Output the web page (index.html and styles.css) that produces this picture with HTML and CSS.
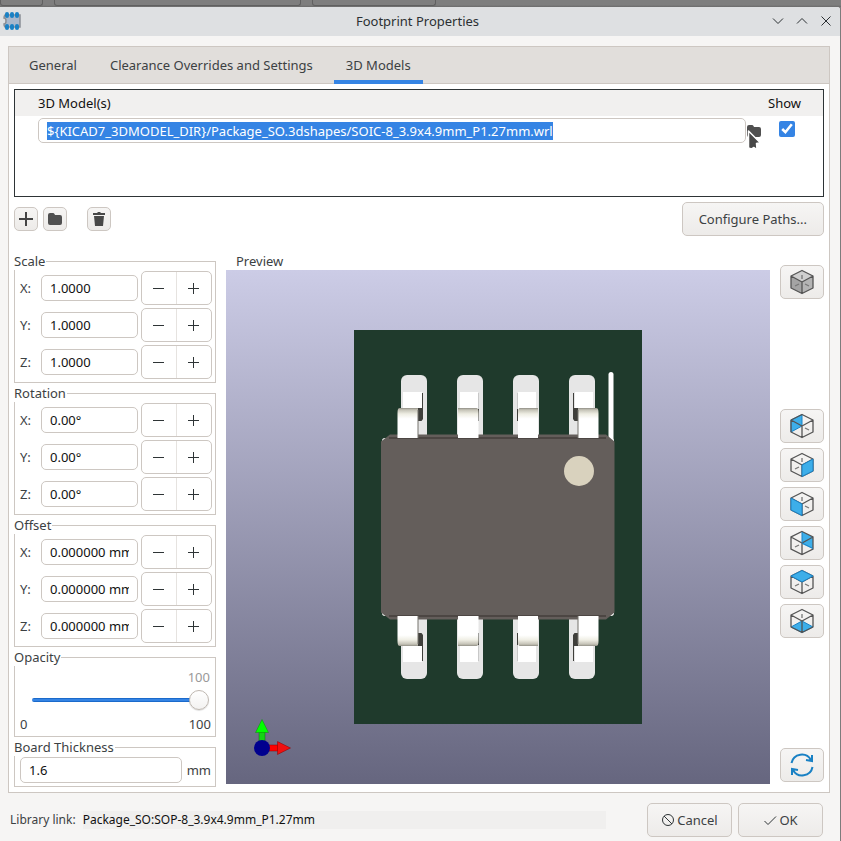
FILE: index.html
```html
<!DOCTYPE html>
<html lang="en">
<head>
<meta charset="utf-8">
<title>Footprint Properties</title>
<link rel="stylesheet" href="styles.css">
</head>
<body>
<svg class="defs" aria-hidden="true">
  <defs>
    <symbol id="i-minus" viewBox="0 0 12 12"><path d="M0 6.500h11" stroke="#2e3436"/></symbol>
    <symbol id="i-plus" viewBox="0 0 12 12"><path d="M0 6.500h11M5.500 1v11" stroke="#2e3436"/></symbol>
    <symbol id="i-folder" viewBox="0 0 16 16"><path d="M1 4q0-2 2-2h3q1 0 1.500 1l.5 1H13q2 0 2 2v6q0 2-2 2H3q-2 0-2-2z" fill="#505050"/></symbol>
    <symbol id="cube" viewBox="0 0 24 26">
      <path d="M12 1.500 23 7v12l-11 5.500L1 19V7zM1 7l11 6 11-6M12 13v11.500" fill="none" stroke="#545454" stroke-width="1.300" stroke-linejoin="round"/>
      <path d="M12 6v4M5 17l4-2M19 17l-4-2" stroke="#777" stroke-width="1.300"/>
    </symbol>
    <symbol id="cube-back" viewBox="0 0 24 26">
      <path d="M12 1.500 23 7v12l-11 5.500L1 19V7zM1 7l11 6 11-6M12 13v11.500" fill="none" stroke="#545454" stroke-width="1.300" stroke-linejoin="round"/>
    </symbol>
  </defs>
</svg>
<div class="backdrop" aria-hidden="true"><i class="first"></i><i></i><i class="last"></i></div>
<main class="window">
  <header class="titlebar">
    <svg class="app-icon" width="18" height="18" viewBox="0 0 18 18">
      <path d="M2 3h15v12H2q-1-1-1-3 2 0 2-3T1 6q0-2 1-3z" fill="#a9b8cc" stroke="#8a8f96" stroke-width="1.500"/>
      <g fill="#1a81c4"><rect x="2" y="0" width="4" height="6" rx="2"/><rect x="7" y="0" width="4" height="6" rx="2"/><rect x="12" y="0" width="4" height="6" rx="2"/><rect x="2" y="12" width="4" height="6" rx="2"/><rect x="7" y="12" width="4" height="6" rx="2"/><rect x="12" y="12" width="4" height="6" rx="2"/></g>
    </svg>
    <h1>Footprint Properties</h1>
    <div class="window-buttons">
      <button type="button" aria-label="Minimize"><svg width="12" height="12" viewBox="0 0 12 12"><path d="M1 3.500 6 8.500l5-5"/></svg></button>
      <button type="button" aria-label="Maximize"><svg width="12" height="12" viewBox="0 0 12 12"><path d="M1 8.500 6 3.500l5 5"/></svg></button>
      <button type="button" aria-label="Close"><svg width="12" height="12" viewBox="0 0 12 12"><path d="m1.500 1.500 9 9m0-9-9 9"/></svg></button>
    </div>
  </header>

  <section class="notebook">
    <nav class="tabs" role="tablist">
      <button type="button" role="tab">General</button>
      <button type="button" role="tab">Clearance Overrides and Settings</button>
      <button type="button" role="tab" aria-selected="true">3D Models</button>
    </nav>
    <div class="page">
      <div class="models">
        <table>
          <thead><tr><th class="name">3D Model(s)</th><th class="show">Show</th></tr></thead>
          <tbody><tr>
            <td class="name"><div class="path">
              <input id="model-path" type="text" aria-label="3D model path" value="${KICAD7_3DMODEL_DIR}/Package_SO.3dshapes/SOIC-8_3.9x4.9mm_P1.27mm.wrl" autofocus>
              <button type="button" aria-label="Browse"><svg width="16" height="16"><use href="#i-folder"/></svg></button>
              <svg class="pointer" width="16" height="24" viewBox="0 0 16 24"><path d="M2.500 2 14 13.500 10.500 14.500 11 20.500 8 18.500 5.500 20 2.500 19z" fill="#484848" stroke="#fff" stroke-width="1.500" stroke-linejoin="round"/></svg>
            </div></td>
            <td class="show"><input type="checkbox" aria-label="Show model" checked></td>
          </tr></tbody>
        </table>
      </div>

      <div class="toolbar">
        <button class="btn tool" type="button" aria-label="Add"><svg width="16" height="16" viewBox="0 0 16 16"><path d="M1 8h14M8 1v14" stroke="#444" stroke-width="2"/></svg></button>
        <button class="btn tool" type="button" aria-label="Browse library"><svg width="16" height="16"><use href="#i-folder"/></svg></button>
        <button class="btn tool remove" type="button" aria-label="Delete"><svg width="16" height="16" viewBox="0 0 16 16"><path d="M2 2h4l1-1h2l1 1h4v2H2zM3 5h10l-1 10H4z" fill="#484848"/></svg></button>
        <button class="btn configure" type="button">Configure Paths...</button>
      </div>

      <div class="body">
        <div class="settings">
          <fieldset>
            <legend>Scale</legend>
            <div class="row"><label for="sx">X:</label><input id="sx" class="entry" value="1.0000"><span class="spin"><button type="button" aria-label="Decrease"><svg><use href="#i-minus"/></svg></button><button type="button" aria-label="Increase"><svg><use href="#i-plus"/></svg></button></span></div>
            <div class="row"><label for="sy">Y:</label><input id="sy" class="entry" value="1.0000"><span class="spin"><button type="button" aria-label="Decrease"><svg><use href="#i-minus"/></svg></button><button type="button" aria-label="Increase"><svg><use href="#i-plus"/></svg></button></span></div>
            <div class="row"><label for="sz">Z:</label><input id="sz" class="entry" value="1.0000"><span class="spin"><button type="button" aria-label="Decrease"><svg><use href="#i-minus"/></svg></button><button type="button" aria-label="Increase"><svg><use href="#i-plus"/></svg></button></span></div>
          </fieldset>
          <fieldset>
            <legend>Rotation</legend>
            <div class="row"><label for="rx">X:</label><input id="rx" class="entry" value="0.00°"><span class="spin"><button type="button" aria-label="Decrease"><svg><use href="#i-minus"/></svg></button><button type="button" aria-label="Increase"><svg><use href="#i-plus"/></svg></button></span></div>
            <div class="row"><label for="ry">Y:</label><input id="ry" class="entry" value="0.00°"><span class="spin"><button type="button" aria-label="Decrease"><svg><use href="#i-minus"/></svg></button><button type="button" aria-label="Increase"><svg><use href="#i-plus"/></svg></button></span></div>
            <div class="row"><label for="rz">Z:</label><input id="rz" class="entry" value="0.00°"><span class="spin"><button type="button" aria-label="Decrease"><svg><use href="#i-minus"/></svg></button><button type="button" aria-label="Increase"><svg><use href="#i-plus"/></svg></button></span></div>
          </fieldset>
          <fieldset>
            <legend>Offset</legend>
            <div class="row"><label for="ox">X:</label><input id="ox" class="entry" value="0.000000 mm"><span class="spin"><button type="button" aria-label="Decrease"><svg><use href="#i-minus"/></svg></button><button type="button" aria-label="Increase"><svg><use href="#i-plus"/></svg></button></span></div>
            <div class="row"><label for="oy">Y:</label><input id="oy" class="entry" value="0.000000 mm"><span class="spin"><button type="button" aria-label="Decrease"><svg><use href="#i-minus"/></svg></button><button type="button" aria-label="Increase"><svg><use href="#i-plus"/></svg></button></span></div>
            <div class="row"><label for="oz">Z:</label><input id="oz" class="entry" value="0.000000 mm"><span class="spin"><button type="button" aria-label="Decrease"><svg><use href="#i-minus"/></svg></button><button type="button" aria-label="Increase"><svg><use href="#i-plus"/></svg></button></span></div>
          </fieldset>
          <fieldset>
            <legend>Opacity</legend>
            <div class="opacity">
              <output for="opacity">100</output>
              <input id="opacity" type="range" min="0" max="100" value="100" aria-label="Opacity">
              <div class="limits"><span>0</span><span>100</span></div>
            </div>
          </fieldset>
          <fieldset>
            <legend>Board Thickness</legend>
            <div class="thickness"><input id="thick" class="entry" value="1.6" aria-label="Board thickness"><label for="thick">mm</label></div>
          </fieldset>
        </div>

        <div class="preview">
          <h2>Preview</h2>
          <div class="canvas">
            <svg viewBox="0 0 544 514" role="img" aria-label="3D view of an 8-pin package">
              <defs>
                <linearGradient id="lead" x1="0" y1="0" x2="0" y2="1"><stop offset="0" stop-color="#8f8d84"/><stop offset=".06" stop-color="#c4c2b6"/><stop offset=".2" stop-color="#efeee4"/><stop offset=".36" stop-color="#fff"/></linearGradient>
                <g id="pins">
                  <g fill="#e6e6e6"><rect x="175" y="105" width="26" height="80" rx="6"/><rect x="231" y="105" width="26" height="80" rx="6"/><rect x="287" y="105" width="26" height="80" rx="6"/><rect x="343" y="105" width="26" height="80" rx="6"/></g>
                  <g fill="#fff"><path d="M177 122h19v18h-19zM234 122h18v18h-18zM292 122h18v18h-18zM349 122h18v18h-18z"/></g>
                  <g fill="#3f3f3b"><path d="M196 123h1v26l-1.500 2H192v-13h4zM252 139h1v12h-1zM291 139h1v12h-1zM348 123h-1v26l1.500 2H352v-13h-4z"/></g>
                  <path d="M252.500 123v16M291.500 123v16" stroke="#c8c8c8"/>
                </g>
                <g id="leads" fill="url(#lead)">
                  <path d="M171.500 168v-25q0-5 2-5H192v30zM232 168v-30h18.500q2 0 2 5v25zM292 168v-25q0-5 2-5h18v30zM352 168v-30h18.500q2 0 2 5v25z"/>
                  <path d="M192 140v28M352 140v28" stroke="#74736d"/>
                </g>
              </defs>
              <rect x="128" y="60" width="288" height="394" fill="#1f3a2c"/>
              <use href="#pins"/>
              <use href="#pins" transform="matrix(1 0 0 -1 0 514)"/>
              <path d="M385 171v-66.500" stroke="#fff" stroke-width="5" stroke-linecap="round"/>
              <path d="M156 171q0-3 3-3h226q3 0 3 3v172q0 3-3 3H159q-3 0-3-3z" fill="#fff"/>
              <path d="M155 171.500 164 164.500H380l8.500 7v171l-8.500 7H164l-9-7z" fill="#645e5b"/>
              <path d="M163 168h217M163 346h217" stroke="#4c4643" stroke-width="2"/>
              <use href="#leads"/>
              <use href="#leads" transform="matrix(1 0 0 -1 0 514)"/>
              <circle cx="353" cy="201" r="15" fill="#d9d2be"/>
              <path d="M33 477v-15h6v15z" fill="#14d414" stroke="#087008" stroke-width=".5"/>
              <path d="m29.500 462.500 6.500-13 6.500 13z" fill="#0f0" stroke="#0b8c0b" stroke-width=".5"/>
              <path d="M42 475h10v6H42z" fill="#f00" stroke="#800" stroke-width=".5"/>
              <path d="m51.500 471.500 13 6.500-13 6.500z" fill="#f01010" stroke="#800" stroke-width=".5"/>
              <circle cx="36" cy="478" r="8" fill="#00008e"/>
            </svg>
          </div>
        </div>

        <div class="views">
          <button class="btn view" type="button" aria-label="Orthographic projection"><svg viewBox="0 0 24 26"><path d="M12 1.500 23 7l-11 6L1 7z" fill="#cfcfcf"/><path d="M1 7l11 6v11.500L1 19z" fill="#a4a4a4"/><path d="M23 7l-11 6v11.500L23 19z" fill="#b4b4b4"/><use href="#cube"/></svg></button>
          <div class="faces">
            <button class="btn view" type="button" aria-label="View left"><svg viewBox="0 0 24 26"><path d="M12 1.500V13L1 19V7z" fill="#3daee9" stroke="#1a81c4"/><use href="#cube-back"/><path d="M15 15l4 2" stroke="#777" stroke-width="1.300"/></svg></button>
            <button class="btn view" type="button" aria-label="View right"><svg viewBox="0 0 24 26"><use href="#cube"/><path d="M12 13l11-6v12l-11 5.500z" fill="#3daee9" stroke="#1a81c4"/></svg></button>
            <button class="btn view" type="button" aria-label="View front"><svg viewBox="0 0 24 26"><use href="#cube"/><path d="M1 7l11 6v11.500L1 19z" fill="#3daee9" stroke="#1a81c4"/></svg></button>
            <button class="btn view" type="button" aria-label="View back"><svg viewBox="0 0 24 26"><path d="M12 1.500 23 7v12l-11-5z" fill="#3daee9"/><path d="M12 1.500 23 7v12l-11 5.500L1 19V7zM1 7l11 6 11-6M12 13v11.500" fill="none" stroke="#545454" stroke-width="1.300"/><path d="M12 2v11l11 5.500" fill="none" stroke="#1a81c4"/><path d="M5 17l4-2" stroke="#777" stroke-width="1.300"/></svg></button>
            <button class="btn view" type="button" aria-label="View top"><svg viewBox="0 0 24 26"><use href="#cube"/><path d="M12 1.500 23 7l-11 6L1 7z" fill="#3daee9" stroke="#1a81c4"/></svg></button>
            <button class="btn view" type="button" aria-label="View bottom"><svg viewBox="0 0 24 26"><path d="M12 13l11 6-11 5.500L1 19z" fill="#3daee9" stroke="#1a81c4"/><use href="#cube-back"/><path d="M12 6v4" stroke="#777" stroke-width="1.300"/></svg></button>
          </div>
          <button class="btn view" type="button" aria-label="Reload"><svg viewBox="0 0 24 26" fill="none" stroke="#1a81c4" stroke-width="2"><path d="M1.500 11A10.500 10.500 0 0 1 21 8M22.500 15A10.500 10.500 0 0 1 3 18M22 3v6l-6-1M2 23v-6l6 1"/></svg></button>
        </div>
      </div>
    </div>
  </section>

  <footer class="footer">
    <label for="link">Library link:</label>
    <input id="link" type="text" value="Package_SO:SOP-8_3.9x4.9mm_P1.27mm" readonly>
    <div class="actions">
      <button class="btn action" type="button"><svg width="14" height="14" viewBox="0 0 14 14"><circle cx="7" cy="7" r="5.500"/><path d="m3 3 8 8"/></svg>Cancel</button>
      <button class="btn action" type="button"><svg width="14" height="14" viewBox="0 0 14 14"><path d="m1.500 8 3.500 3.500 8-8"/></svg>OK</button>
    </div>
  </footer>
</main>
<script>
  const path = document.getElementById('model-path');
  path.focus();
  path.select();
</script>
</body>
</html>
```
FILE: styles.css
```css
* { box-sizing: border-box; }

body {
  display: flex;
  flex-direction: column;
  min-height: 100vh;
  margin: 0;
  background: #7c7c7c;
  color: #3c4143;
  font: 13px/18px "Noto Sans", sans-serif;
}

button, input { font: inherit; color: inherit; margin: 0; }
button { border: 0; background: none; padding: 0; }
svg { display: block; flex: none; }
.defs { position: absolute; width: 0; height: 0; }
h1, h2 { margin: 0; font: inherit; }

.backdrop { display: flex; gap: 11px; height: 7px; background: linear-gradient(#7e7e7e 70%, #6b6b6b); }
.backdrop i { width: 247px; height: 6px; border: 1px solid #606060; border-top: 0; border-radius: 0 0 3px 3px; }
.backdrop .first { width: 43px; }
.backdrop .last { width: 124px; }

.window {
  display: flex;
  flex-direction: column;
  flex: 1;
  margin-right: 1px;
  border-radius: 0 3px 0 0;
  background: #f6f5f4;
  overflow: hidden;
}

.titlebar {
  display: grid;
  grid-template-columns: 1fr auto 1fr;
  align-items: center;
  height: 29px;
  padding: 0 8px 2px 3px;
  background: #dee0e2;
  color: #2b3033;
}
.window-buttons { display: flex; justify-content: flex-end; gap: 12px; }
.window-buttons path { fill: none; stroke: #2b3033; }

.notebook {
  display: flex;
  flex-direction: column;
  flex: 1;
  margin: 10px 10px 0 8px;
  border: 1px solid #cdc7c2;
  background: #fff;
}
.tabs { display: flex; height: 37px; padding-left: 8px; border-bottom: 1px solid #cdc7c2; background: #e1dedb; }
.tabs button { height: 37px; padding: 2px 12px 0; border-bottom: 4px solid transparent; }
.tabs button + button { margin-left: 9px; }
.tabs [aria-selected] { border-color: #3584e4; }

.page { display: flex; flex-direction: column; flex: 1; padding: 5px; }

.models { min-height: 108px; border: 1px solid #2e3436; background: #fff; }
.models table { width: 100%; border-collapse: collapse; table-layout: fixed; }
.models th { height: 26px; padding: 0; background: #f1f0ef; color: #111; font-weight: normal; text-align: left; }
.models td { padding: 2px 0 0; }
.models .name { padding-left: 23px; }
.models .show { width: 77px; text-align: center; }
.path { position: relative; display: flex; align-items: center; margin-right: -16px; }
.path input {
  flex: 1;
  min-width: 0;
  height: 25px;
  padding: 0 8px;
  border: 1px solid #cdc7c2;
  border-radius: 5px;
  background: #fff;
  outline: 0;
}
.path input::selection { background: #3584e4; color: #fff; }
.path .pointer { position: absolute; right: 0; top: 11px; }
.path button { width: 16px; }
.models [type="checkbox"] { width: 16px; height: 16px; margin: 0 0 4px 4px; accent-color: #3584e4; vertical-align: middle; }

.btn {
  display: flex;
  align-items: center;
  justify-content: center;
  height: 34px;
  border: 1px solid #cdc7c2;
  border-radius: 5px;
  background: linear-gradient(#f6f5f4, #edebe9);
}
.toolbar { display: flex; align-items: center; gap: 5px; margin: 5px 0 16px; }
.tool { width: 24px; height: 24px; }
.remove { margin-left: 15px; }
.configure { margin-left: auto; padding: 0 16px; }

.body { display: grid; grid-template-columns: 202px minmax(0, 1fr) 44px; gap: 10px; flex: 1; }

.settings { display: flex; flex-direction: column; gap: 1px; }
fieldset { min-width: 0; margin: 0; padding: 1px 3px 3px 5px; border: 1px solid #cdc7c2; }
legend { margin-left: -6px; padding: 0 1px 0 0; background: #fff; }
.row { display: grid; grid-template-columns: 18px minmax(0, 1fr) 71px; align-items: center; gap: 3px; }
.row + .row { margin-top: 3px; }
.entry {
  width: 100%;
  min-width: 0;
  height: 26px;
  padding: 0 8px;
  border: 1px solid #cdc7c2;
  border-radius: 5px;
  background: #fff;
  color: #111;
}
.spin { display: flex; height: 34px; border: 1px solid #cdc7c2; border-radius: 5px; }
.spin button { display: grid; place-items: center; flex: 1; }
.spin button + button { border-left: 1px solid #e6e3e0; }
.spin svg { width: 12px; height: 12px; }

.opacity { display: flex; flex-direction: column; padding: 1px 1px 0 0; }
.opacity output { align-self: flex-end; color: #999; padding-right: 1px; }
.opacity input { appearance: none; width: 177px; height: 20px; margin: 4px 2px 5px 12px; background: none; }
.opacity input::-webkit-slider-runnable-track {
  height: 4px;
  border-radius: 2px;
  background: linear-gradient(#1b6acb 25%, #3584e4 25% 75%, #1b6acb 75%) no-repeat left / calc(100% - 10px) 100%;
}
.opacity input::-webkit-slider-thumb {
  appearance: none;
  width: 20px;
  height: 20px;
  margin-top: -8px;
  border: 1px solid #bfb8b1;
  border-radius: 50%;
  background: linear-gradient(#fff, #f3f2f1);
  box-shadow: 0 1px 1px #0002;
}
.limits { display: flex; justify-content: space-between; }

.thickness { display: flex; align-items: center; gap: 5px; padding-right: 1px; }
.thickness .entry { flex: 1; }

.preview { display: flex; flex-direction: column; padding-bottom: 3px; }
.preview h2 { padding-left: 10px; }
.canvas { flex: 1; display: grid; background: linear-gradient(#cccce6, #66667f); }
.canvas svg { width: 100%; height: 100%; }

.views { display: flex; flex-direction: column; justify-content: space-between; padding: 13px 0 5px; }
.faces { display: grid; gap: 5px; }
.view svg { width: 24px; height: 26px; }

.footer { display: flex; align-items: center; gap: 7px; padding: 10px 17px 4px 10px; font-size: 12px; }
.footer { padding-bottom: 5px; }
.footer input { flex: 0 1 523px; min-width: 0; height: 18px; padding: 0; border: 0; background: #f0efee; color: #111; }
.actions { display: flex; gap: 6px; margin-left: auto; font-size: 13px; }
.action { width: 85px; gap: 2px; }
.action svg { fill: none; stroke: #2e3436; }
```
